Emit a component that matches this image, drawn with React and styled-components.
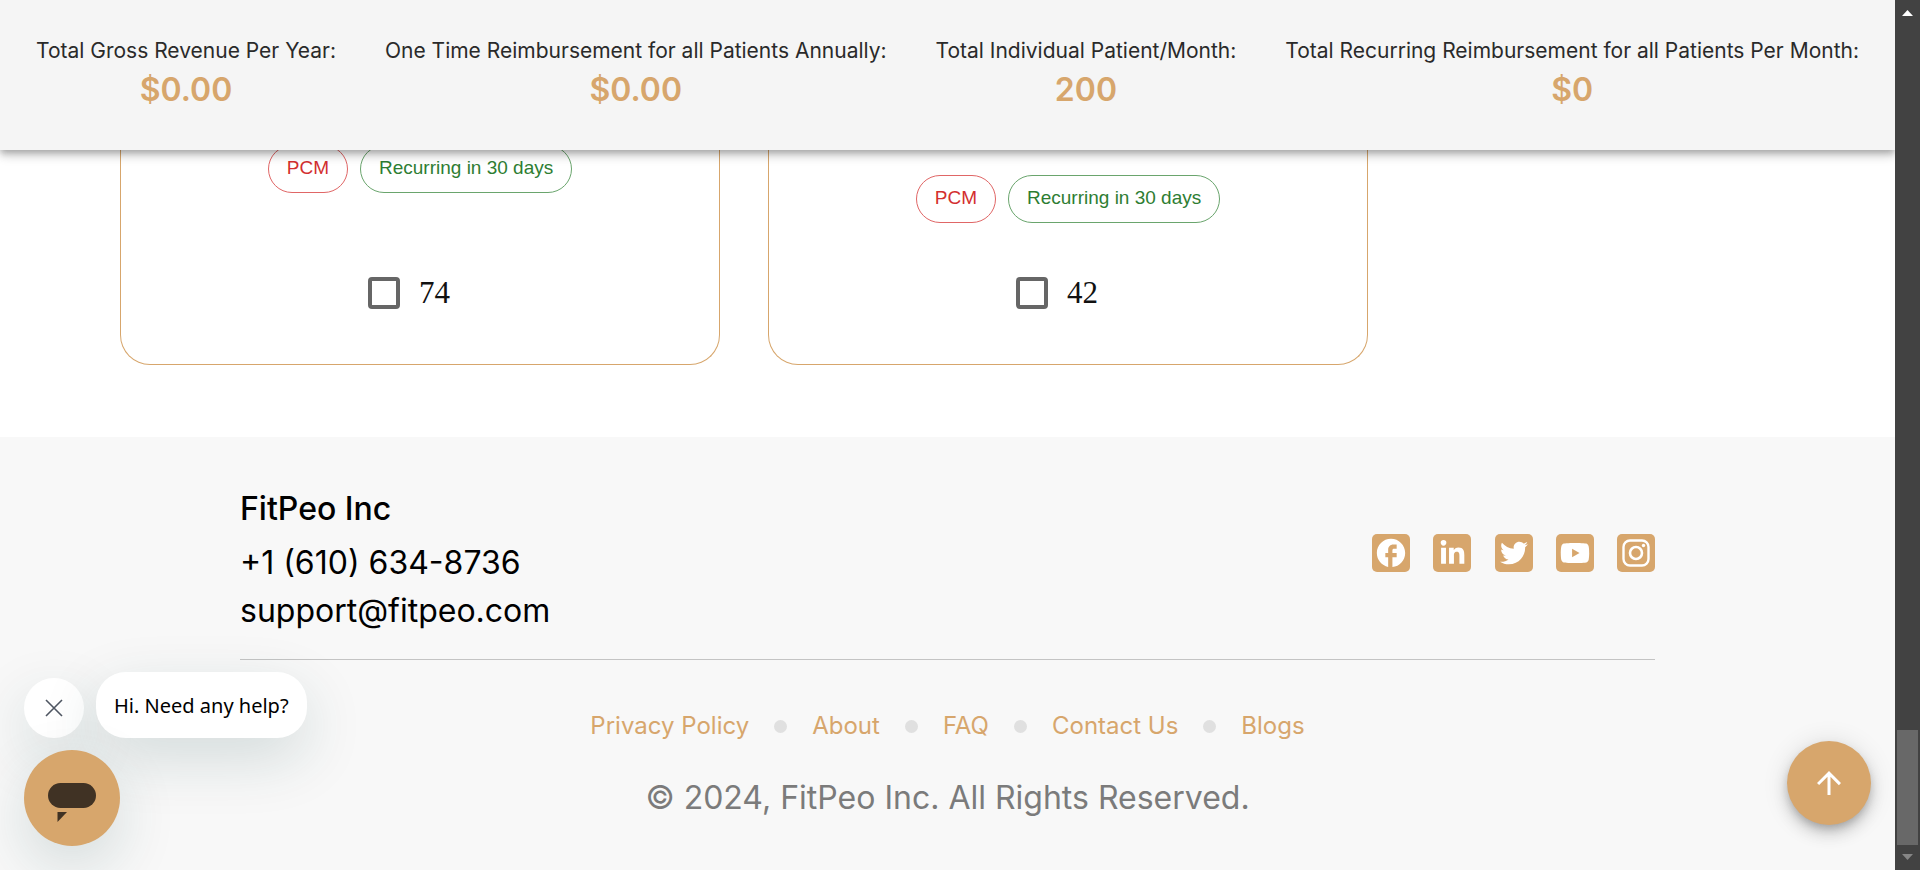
import React from "react";
import styled, { createGlobalStyle } from "styled-components";
import { MdFacebook, MdArrowUpward } from "react-icons/md";
import { FaLinkedinIn, FaTwitter, FaYoutube } from "react-icons/fa";

const GOLD = "#d7a66c";

const Global = createGlobalStyle`
  * { box-sizing: border-box; }
  body { margin: 0; background: #fff; font-family: Inter, "Liberation Sans", sans-serif; }
  html, body { overflow: hidden; }
  button { border: 0; padding: 0; cursor: pointer; font: inherit; }
  a { color: inherit; text-decoration: none; }
`;

const Screen = styled.div`
  display: grid;
  grid-template-columns: minmax(0, 1fr) 25px;
  height: 100vh;
`;

const Page = styled.div`
  position: relative;
  display: flex;
  flex-direction: column;
  overflow: hidden;
`;

const StatBar = styled.header`
  position: absolute;
  inset: 0 0 auto;
  z-index: 2;
  display: flex;
  justify-content: space-between;
  padding: 35px 36px 37px;
  background: #f5f5f5;
  box-shadow:
    0 3px 6px -1px rgba(0, 0, 0, 0.2),
    0 6px 8px 0 rgba(0, 0, 0, 0.14),
    0 2px 15px 0 rgba(0, 0, 0, 0.12);
`;

const Stat = styled.div`
  display: flex;
  flex-direction: column;
  align-items: center;
  white-space: nowrap;
`;

const StatLabel = styled.span`
  font-size: 21px;
  line-height: 32px;
  color: #2a2a2a;
`;

const StatValue = styled.strong`
  font-size: 32px;
  font-weight: 600;
  line-height: 46px;
  color: ${GOLD};
`;

const Cards = styled.main`
  display: grid;
  grid-template-columns: repeat(2, minmax(0, 600px));
  gap: 48px;
  padding: 0 120px 72px;
`;

const Card = styled.section`
  display: flex;
  flex-direction: column;
  align-items: center;
  justify-content: space-between;
  height: 365px;
  padding: ${(p) => p.$lead}px 24px 50px;
  border: 1px solid ${GOLD};
  border-top: 0;
  border-radius: 0 0 30px 30px;
`;

const Chips = styled.div`
  display: flex;
  gap: 12px;
`;

const Chip = styled.span`
  height: 48px;
  padding: 0 18px;
  border: 1px solid ${(p) => p.$line};
  border-radius: 24px;
  color: ${(p) => p.$ink};
  font: 19px/44px "Liberation Sans", Arial, sans-serif;
`;

const Choice = styled.label`
  display: flex;
  align-items: center;
  gap: 19px;
  margin-right: 22px;
  font: 31px/42px "Liberation Serif", "Times New Roman", serif;
  color: #111;
`;

const Tick = styled.input`
  appearance: none;
  width: 32px;
  height: 32px;
  margin: 0;
  border: 4px solid #666;
  border-radius: 4px;
  background: #fff;
`;

const Footer = styled.footer`
  flex: 1;
  padding: 48px 240px 0;
  background: #f8f8f8;
`;

const FooterTop = styled.div`
  display: flex;
  align-items: center;
  justify-content: space-between;
  padding-bottom: 24px;
  border-bottom: 1px solid #c4c4c4;
`;

const Contact = styled.address`
  display: flex;
  flex-direction: column;
  font-style: normal;
  font-size: 32px;
  line-height: 48px;
  color: #000;
`;

const Company = styled.strong`
  margin-bottom: 6px;
  font-weight: 500;
`;

const Socials = styled.nav`
  display: flex;
  justify-content: space-between;
  width: 283px;
  margin-bottom: 14px;
`;

const Social = styled.a`
  display: grid;
  place-items: center;
  width: 38px;
  height: 38px;
  border-radius: 5px;
  background: ${GOLD};
  color: #fff;
`;

const Links = styled.nav`
  display: flex;
  align-items: center;
  justify-content: center;
  gap: 25px;
  margin-top: 48px;
  font-size: 24px;
  line-height: 36px;
  color: ${GOLD};
`;

const Dot = styled.span`
  width: 13px;
  height: 13px;
  border-radius: 50%;
  background: #e0e0e0;
`;

const Copyright = styled.p`
  margin: 30px 0 0;
  font-size: 32px;
  line-height: 48px;
  text-align: center;
  color: #7b7b7b;
`;

const Chat = styled.aside`
  position: absolute;
  left: 24px;
  bottom: 24px;
  z-index: 3;
  display: flex;
  flex-direction: column;
  gap: 12px;
`;

const ChatRow = styled.div`
  display: flex;
  align-items: flex-end;
  gap: 12px;
`;

const CHAT_SHADOW = "0 20px 60px rgba(20, 70, 70, 0.16)";

const CloseChat = styled.button`
  display: grid;
  place-items: center;
  width: 60px;
  height: 60px;
  border-radius: 50%;
  background: #fff;
  box-shadow: ${CHAT_SHADOW};
`;

const Bubble = styled.button`
  height: 66px;
  padding: 2px 18px 0;
  border-radius: 30px;
  background: #fff;
  box-shadow: ${CHAT_SHADOW};
  font: 20px/30px "Noto Sans", "Open Sans", sans-serif;
  color: #000;
`;

const Launcher = styled.button`
  display: grid;
  place-items: center;
  width: 96px;
  height: 96px;
  border-radius: 50%;
  background: ${GOLD};
  box-shadow: ${CHAT_SHADOW};
`;

const ToTop = styled.button`
  position: absolute;
  right: 24px;
  bottom: 45px;
  display: grid;
  place-items: center;
  width: 84px;
  height: 84px;
  border-radius: 50%;
  background: ${GOLD};
  color: #fff;
  box-shadow:
    0 5px 8px -2px rgba(0, 0, 0, 0.2),
    0 9px 15px 0 rgba(0, 0, 0, 0.14),
    0 2px 27px 0 rgba(0, 0, 0, 0.12);
`;

const ScrollTrack = styled.div`
  display: flex;
  flex-direction: column;
  align-items: center;
  padding: 10px 0;
  background: #424242;
`;

const ScrollThumb = styled.div`
  width: 21px;
  height: 115px;
  margin: auto 0 9px;
  background: #686868;
`;

const stats = [
  ["Total Gross Revenue Per Year:", "$0.00"],
  ["One Time Reimbursement for all Patients Annually:", "$0.00"],
  ["Total Individual Patient/Month:", "200"],
  ["Total Recurring Reimbursement for all Patients Per Month:", "$0"],
];

const cards = [
  { lead: 145, amount: "74" },
  { lead: 175, amount: "42" },
];

const InstagramIcon = () => (
  <svg width="28" height="28" viewBox="0 0 28 28" fill="none" stroke="#fff" aria-hidden="true">
    <rect x="1.5" y="1.5" width="25" height="25" rx="6.5" strokeWidth="2.4" />
    <circle cx="14" cy="14" r="6" strokeWidth="2.6" />
    <circle cx="21.5" cy="6.5" r="1.7" fill="#fff" stroke="none" />
  </svg>
);

const socials = [
  ["Facebook", <MdFacebook size={34} />],
  ["LinkedIn", <FaLinkedinIn size={27} />],
  ["Twitter", <FaTwitter size={28} />],
  ["YouTube", <FaYoutube size={30} />],
  ["Instagram", <InstagramIcon />],
];

const links = ["Privacy Policy", "About", "FAQ", "Contact Us", "Blogs"];

export default function App() {
  return (
    <Screen>
      <Global />
      <Page>
        <StatBar>
          {stats.map(([label, value]) => (
            <Stat key={label}>
              <StatLabel>{label}</StatLabel>
              <StatValue>{value}</StatValue>
            </Stat>
          ))}
        </StatBar>

        <Cards>
          {cards.map((card) => (
            <Card key={card.amount} $lead={card.lead}>
              <Chips>
                <Chip $line="#e06666" $ink="#d32f2f">PCM</Chip>
                <Chip $line="#6aa56d" $ink="#2e7d32">Recurring in 30 days</Chip>
              </Chips>
              <Choice>
                <Tick type="checkbox" />
                {card.amount}
              </Choice>
            </Card>
          ))}
        </Cards>

        <Footer>
          <FooterTop>
            <Contact>
              <Company>FitPeo Inc</Company>
              <a href="tel:+16106348736">+1 (610) 634-8736</a>
              <a href="mailto:support@fitpeo.com">support@fitpeo.com</a>
            </Contact>
            <Socials>
              {socials.map(([name, icon]) => (
                <Social key={name} href="#" aria-label={name}>{icon}</Social>
              ))}
            </Socials>
          </FooterTop>
          <Links>
            {links.map((link, i) => (
              <React.Fragment key={link}>
                {i > 0 && <Dot />}
                <a href="#">{link}</a>
              </React.Fragment>
            ))}
          </Links>
          <Copyright>© 2024, FitPeo Inc. All Rights Reserved.</Copyright>
        </Footer>

        <Chat>
          <ChatRow>
            <CloseChat aria-label="Close message">
              <svg width="18" height="18" viewBox="0 0 18 18" stroke="#4f5662" strokeWidth="1.6" aria-hidden="true">
                <path d="M1 1L17 17M17 1L1 17" />
              </svg>
            </CloseChat>
            <Bubble>Hi. Need any help?</Bubble>
          </ChatRow>
          <Launcher aria-label="Open chat">
            <svg width="48" height="48" viewBox="0 0 48 48" fill="#403224" aria-hidden="true">
              <rect x="0" y="9" width="48" height="25" rx="12.5" />
              <path d="M9.500 38H19L9.500 48Z" />
            </svg>
          </Launcher>
        </Chat>

        <ToTop aria-label="Back to top">
          <MdArrowUpward size={36} />
        </ToTop>
      </Page>

      <ScrollTrack aria-hidden="true">
        <svg width="11" height="6" viewBox="0 0 11 6" fill="#fff"><path d="M0 6L5.500 0L11 6Z" /></svg>
        <ScrollThumb />
        <svg width="11" height="6" viewBox="0 0 11 6" fill="#868686"><path d="M0 0H11L5.500 6Z" /></svg>
      </ScrollTrack>
    </Screen>
  );
}
